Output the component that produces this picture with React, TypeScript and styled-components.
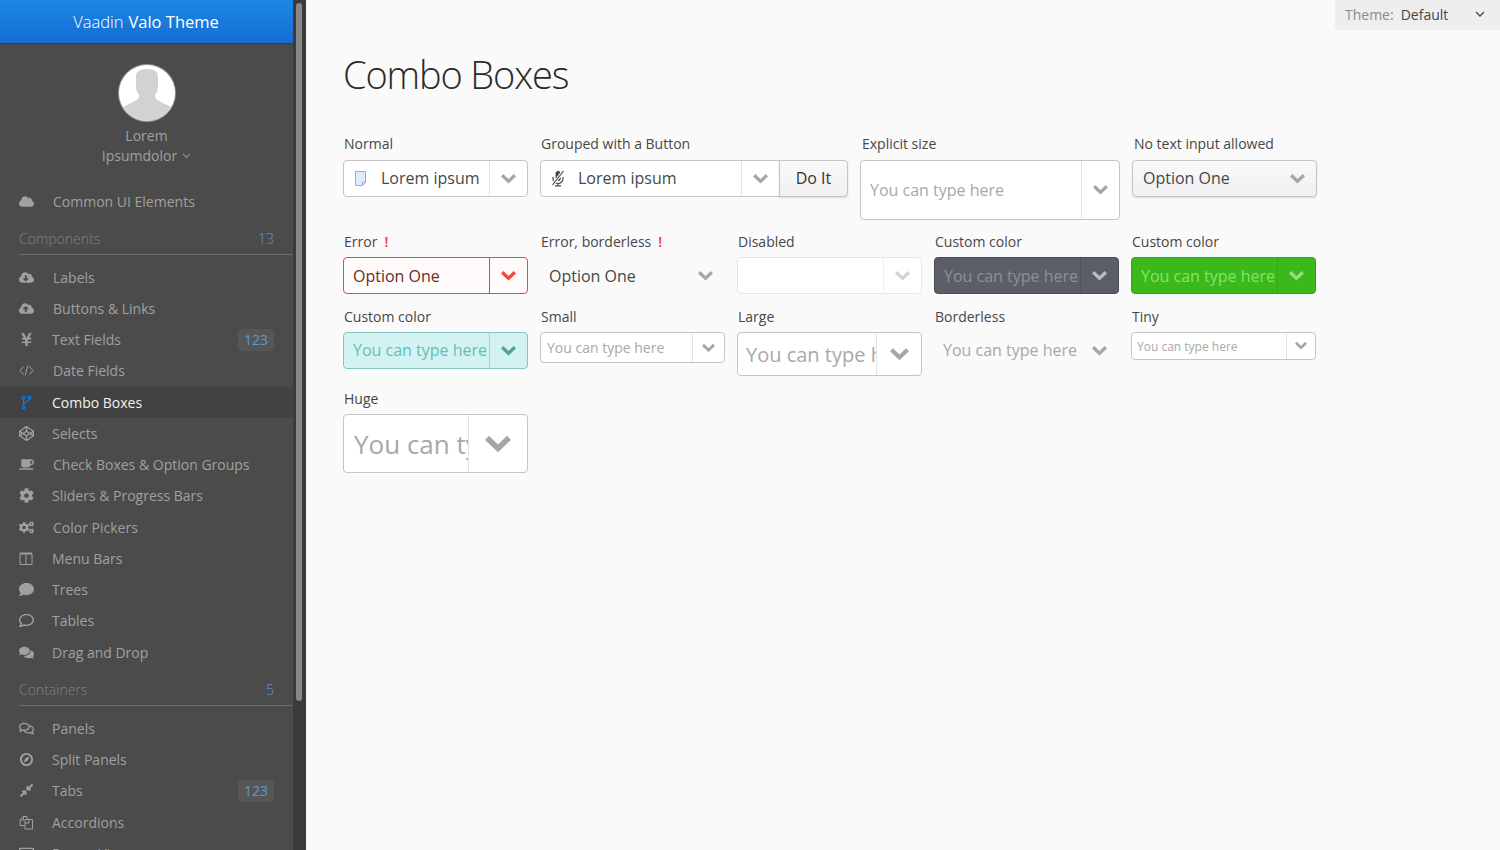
import React from "react";
import styled, { createGlobalStyle } from "styled-components";
import {
  FaCloud, FaCloudDownloadAlt, FaCloudUploadAlt, FaYenSign, FaCodepen,
  FaCoffee, FaCog, FaCogs, FaComment, FaRegComment, FaComments, FaRegComments,
  FaCompressAlt, FaRegCreditCard,
} from "react-icons/fa";

//#region Style Definitions
const GlobalStyle = createGlobalStyle`
  html, body { margin: 0; height: 100%; overflow: hidden; }
  body { font-family: "Open Sans", sans-serif; background: #fafafa; color: #474747; }
  * { box-sizing: border-box; }
`;

const Page = styled.div`
  display: flex;
  width: 1500px;
  height: 850px;
  overflow: hidden;
  position: relative;
`;

const Sidebar = styled.aside`
  width: 293px;
  flex: none;
  height: 850px;
  overflow: hidden;
  background: #4b4b4b;
`;

const ScrollTrack = styled.div`
  width: 13px;
  flex: none;
  background: #3b3b3b;
  padding: 3px 4px 0 3px;
`;

const ScrollThumb = styled.div`
  height: 698px;
  background: #868686;
  border-radius: 3px;
`;

const Brand = styled.div`
  height: 43px;
  display: flex;
  align-items: center;
  justify-content: center;
  padding-right: 1px;
  background: linear-gradient(to bottom, #1b88e4, #166cd3);
  color: #fff;
  font-size: 16.5px;
  gap: 5px;
  box-shadow: 0 1px 1px rgba(0, 0, 0, 0.2);
`;

const BrandLight = styled.span`
  font-weight: 300;
`;

const UserBlock = styled.div`
  display: flex;
  flex-direction: column;
  align-items: center;
  padding-top: 21px;
  height: 142.5px;
  color: #a0a0a0;
  font-size: 14px;
  line-height: 20px;
`;

const Avatar = styled.svg`
  width: 58px;
  height: 58px;
  margin-bottom: 4px;
  display: block;
`;

const UserName = styled.div`
  display: flex;
  align-items: center;
  gap: 5px;
`;

const NavRow = styled.div<{ $active?: boolean; $textGap: number }>`
  height: 31.25px;
  display: flex;
  align-items: center;
  padding-left: 19px;
  padding-right: 19px;
  font-size: 14px;
  color: ${(p) => (p.$active ? "#f2f2f2" : "#a0a0a0")};
  background: ${(p) => (p.$active ? "#424242" : "transparent")};

  & > svg {
    width: 15px;
    height: 15px;
    flex: none;
    margin-right: ${(p) => p.$textGap}px;
    color: ${(p) => (p.$active ? "#1f74cc" : "#a0a0a0")};
  }
`;

const NavLabel = styled.span`
  flex: 1;
  white-space: nowrap;
`;

const NavBadge = styled.span`
  width: 36px;
  height: 22px;
  border-radius: 4px;
  background: #565656;
  color: #5f97d2;
  font-size: 14px;
  display: flex;
  align-items: center;
  justify-content: center;
`;

const SectionHead = styled.div<{ $top: number; $bottom: number }>`
  margin: ${(p) => p.$top}px 0 ${(p) => p.$bottom}px 19px;
  height: 32px;
  display: flex;
  align-items: center;
  padding-right: 19px;
  border-bottom: 1px solid #6c6c6c;
  font-size: 14px;
  font-weight: 300;
  color: #808080;
`;

const SectionCount = styled.span`
  color: #5b93d0;
  margin-left: auto;
`;

const Main = styled.main`
  flex: 1;
  padding: 0 0 0 37px;
`;

const Title = styled.h1`
  margin: 0;
  padding-top: 47px;
  height: 135.4px;
  font-size: 38px;
  line-height: 54px;
  font-weight: 300;
  letter-spacing: -0.03em;
  color: #2b2b2b;
`;

const FieldWrap = styled.div`
  display: flex;
  flex-wrap: wrap;
  align-items: flex-start;
  gap: 13.15px 12px;
  width: 990px;
`;

const Field = styled.div<{ $width: number }>`
  width: ${(p) => p.$width}px;
`;

const Caption = styled.div<{ $indent: number }>`
  height: 24.3px;
  padding-left: ${(p) => p.$indent}px;
  font-size: 14px;
  line-height: 18px;
  color: #474747;
  white-space: nowrap;
`;

const ErrorMark = styled.span`
  color: #f0392c;
  font-weight: 600;
  margin-left: 7px;
`;

const GroupRow = styled.div`
  display: flex;
`;

type Tone = "plain" | "error" | "bare" | "dark" | "green" | "teal" | "button" | "off";

const tones: Record<Tone, { bg: string; line: string; split: string; text: string; hint: string; arrow: string }> = {
  plain: { bg: "#fff", line: "#c5c5c5", split: "#e4e4e4", text: "#474747", hint: "#a8a8a8", arrow: "#a6a6a6" },
  error: { bg: "#fffbfb", line: "#ed473b", split: "#ed473b", text: "#6c2a26", hint: "#a8a8a8", arrow: "#ed473b" },
  bare: { bg: "transparent", line: "transparent", split: "transparent", text: "#474747", hint: "#a8a8a8", arrow: "#a6a6a6" },
  dark: { bg: "#5b5e67", line: "#4a4c54", split: "#50535b", text: "#8e9097", hint: "#8e9097", arrow: "#bcbdc0" },
  green: { bg: "#3cb91a", line: "#34a516", split: "#35a717", text: "#86e26e", hint: "#86e26e", arrow: "#8fe27a" },
  teal: { bg: "#d2f3f1", line: "#86c4c1", split: "#a5d5d2", text: "#66bdb7", hint: "#66bdb7", arrow: "#53a19d" },
  button: { bg: "linear-gradient(to bottom, #fafafa, #efefef)", line: "#c5c5c5", split: "transparent", text: "#474747", hint: "#a8a8a8", arrow: "#a6a6a6" },
  off: { bg: "#fff", line: "#e6e6e6", split: "#eeeeee", text: "#ccc", hint: "#ccc", arrow: "#d3d3d3" },
};

const Box = styled.div<{ $tone: Tone; $height: number; $font: number; $joined?: boolean }>`
  display: flex;
  flex: 1;
  min-width: 0;
  height: ${(p) => p.$height}px;
  font-size: ${(p) => p.$font}px;
  background: ${(p) => tones[p.$tone].bg};
  border: 1px solid ${(p) => tones[p.$tone].line};
  border-radius: ${(p) => (p.$joined ? "4px 0 0 4px" : "4px")};
  ${(p) => (p.$tone === "button" ? "box-shadow: 0 1px 2px rgba(0,0,0,0.14);" : "")}
`;

const Value = styled.div<{ $tone: Tone; $hint: boolean; $left: number; $drop: number }>`
  flex: 1;
  min-width: 0;
  position: relative;
  overflow: hidden;
  white-space: nowrap;
  display: flex;
  align-items: center;
  padding-left: ${(p) => p.$left}px;
  padding-top: ${(p) => p.$drop}px;
  color: ${(p) => (p.$hint ? tones[p.$tone].hint : tones[p.$tone].text)};
`;

const LeadIcon = styled.span`
  position: absolute;
  left: 10px;
  top: 9px;
  display: flex;
`;

const Toggle = styled.div<{ $tone: Tone; $width: number }>`
  width: ${(p) => p.$width}px;
  flex: none;
  display: flex;
  align-items: center;
  justify-content: center;
  border-left: 1px solid ${(p) => tones[p.$tone].split};
  color: ${(p) => tones[p.$tone].arrow};
`;

const DoItButton = styled.div`
  width: 69px;
  height: 37px;
  flex: none;
  display: flex;
  align-items: center;
  justify-content: center;
  margin-left: -1px;
  padding-bottom: 1px;
  font-size: 16px;
  color: #333;
  border: 1px solid #c5c5c5;
  border-radius: 0 4px 4px 0;
  background: linear-gradient(to bottom, #fafafa, #efefef);
  box-shadow: 0 1px 2px rgba(0, 0, 0, 0.14);
`;

const ThemePicker = styled.div`
  position: absolute;
  top: 0;
  right: 0;
  width: 165px;
  height: 30px;
  display: flex;
  align-items: center;
  padding: 0 15px 2px 10px;
  background: #eeeeee;
  border-radius: 0 0 0 4px;
  font-size: 14px;
  color: #474747;
`;

const ThemeLabel = styled.span`
  color: #8c8c8c;
  margin-right: 7px;
`;

const ThemeValue = styled.span`
  flex: 1;
`;
//#endregion

const Chevron = ({ width }: { width: number }) => (
  <svg width={width} viewBox="0 0 15 11" fill="currentColor" aria-hidden="true">
    <path d="M0 3.4 2.3 1 7.5 6 12.700 1 15 3.4 7.5 10.5z" />
  </svg>
);

const ThinChevron = ({ width, color }: { width: number; color: string }) => (
  <svg width={width} viewBox="0 0 10 6" fill="none" stroke={color} strokeWidth="1.5" aria-hidden="true">
    <path d="M1 1l4 4 4-4" />
  </svg>
);

//#region Icons drawn by hand, the packages only have heavier versions
const CodeIcon = () => (
  <svg viewBox="0 0 15 15" fill="none" stroke="currentColor" strokeWidth="1">
    <path d="M4.500 3.500 1 7.500l3.500 4M10.500 3.500l3.500 4-3.500 4M8.800 2.500 6.200 12.500" />
  </svg>
);

const BranchIcon = () => (
  <svg viewBox="0 0 15 15" fill="none" stroke="currentColor" strokeWidth="1.3">
    <circle cx="4.500" cy="2.500" r="1.300" />
    <circle cx="10.500" cy="2.500" r="1.300" />
    <circle cx="4.500" cy="12.500" r="1.300" />
    <path d="M4.500 3.800v7.400M10.500 3.800c0 3.700-6 3-6 6" />
  </svg>
);

const ColumnsIcon = () => (
  <svg viewBox="0 0 15 15" fill="none" stroke="currentColor">
    <path d="M1 2.500h12v11H1zM7 2.500v11" />
    <path d="M1 2.500h12" strokeWidth="2" />
  </svg>
);

const CompassIcon = () => (
  <svg viewBox="0 0 15 15">
    <circle cx="7.500" cy="7.500" r="5.600" fill="none" stroke="currentColor" strokeWidth="1.900" />
    <path d="M10.500 4.500 8.700 8.700 4.500 10.500 6.300 6.300z" fill="currentColor" />
  </svg>
);

const CopyIcon = () => (
  <svg viewBox="0 0 15 15" fill="none" stroke="currentColor">
    <path d="M5.500 10.500H1V5l3-3.500h4V4" />
    <path d="M4.500 1.500V5H1" />
    <path d="M5.500 4.500h4l3.500 0v9.500H5.500zM9.500 4.500V8H5.500" transform="translate(.5 0)" />
  </svg>
);

const FileIcon = () => (
  <svg width="13" height="17" viewBox="0 0 13 17" aria-hidden="true">
    <path d="M1.500 1.500h10v10.500l-3 3.500h-7z" fill="#e0ecfb" stroke="#82b2e8" />
    <path d="M8.500 15.500V12h3z" fill="#fff" stroke="#82b2e8" />
  </svg>
);

const MicSlashIcon = () => (
  <svg width="14" height="17" viewBox="0 0 14 17" fill="#4a4a4a" aria-hidden="true">
    <path d="M4.500 3.500a2.600 2.600 0 0 1 5.200 0v5a2.600 2.600 0 0 1-5.200 0z" />
    <path d="M2 7v1.500a5 5 0 0 0 10 0V7M7 13.500v2M4 15.800h6" fill="none" stroke="#4a4a4a" strokeWidth="1.200" />
    <path d="M12.500 1 1.500 15" stroke="#fff" strokeWidth="3" />
    <path d="M12.500 1 1.500 15" stroke="#4a4a4a" strokeWidth="1.200" />
  </svg>
);
//#endregion

const sizes = {
  tiny: { height: 28, font: 12, toggle: 29, arrow: 12, left: 5, drop: 1 },
  small: { height: 31, font: 14, toggle: 32, arrow: 13, left: 6, drop: 0 },
  normal: { height: 37, font: 16, toggle: 38, arrow: 15, left: 9, drop: 0 },
  large: { height: 44.6, font: 20, toggle: 45, arrow: 19, left: 8, drop: 0 },
  huge: { height: 59, font: 26, toggle: 59, arrow: 26, left: 10, drop: 1 },
};

type ComboProps = {
  caption: string;
  width: number;
  text: string;
  hint?: boolean;
  tone?: Tone;
  size?: keyof typeof sizes;
  error?: boolean;
  lead?: React.ReactNode;
  boxHeight?: number;
  left?: number;
  indent?: number;
  withButton?: boolean;
};

function Combo(props: ComboProps) {
  const s = sizes[props.size || "normal"];
  const tone = props.tone || "plain";
  const box = (
    <Box $tone={tone} $height={props.boxHeight || s.height} $font={s.font} $joined={props.withButton}>
      <Value $tone={tone} $hint={!!props.hint} $left={props.lead ? 37 : props.left ?? s.left} $drop={s.drop}>
        {props.lead && <LeadIcon>{props.lead}</LeadIcon>}
        {props.text}
      </Value>
      <Toggle $tone={tone} $width={s.toggle}>
        <Chevron width={s.arrow} />
      </Toggle>
    </Box>
  );
  return (
    <Field $width={props.width}>
      <Caption $indent={props.indent ?? 1}>
        {props.caption}
        {props.error && <ErrorMark>!</ErrorMark>}
      </Caption>
      {props.withButton ? (
        <GroupRow>
          {box}
          <DoItButton>Do It</DoItButton>
        </GroupRow>
      ) : (
        box
      )}
    </Field>
  );
}

const itemsA = [
  { label: "Labels", icon: <FaCloudDownloadAlt />, gap: 19 },
  { label: "Buttons & Links", icon: <FaCloudUploadAlt />, gap: 19 },
  { label: "Text Fields", icon: <FaYenSign />, gap: 18, badge: "123" },
  { label: "Date Fields", icon: <CodeIcon />, gap: 19 },
  { label: "Combo Boxes", icon: <BranchIcon />, gap: 18, active: true },
  { label: "Selects", icon: <FaCodepen />, gap: 18 },
  { label: "Check Boxes & Option Groups", icon: <FaCoffee />, gap: 19 },
  { label: "Sliders & Progress Bars", icon: <FaCog />, gap: 18 },
  { label: "Color Pickers", icon: <FaCogs />, gap: 19 },
  { label: "Menu Bars", icon: <ColumnsIcon />, gap: 18 },
  { label: "Trees", icon: <FaComment />, gap: 18 },
  { label: "Tables", icon: <FaRegComment />, gap: 18 },
  { label: "Drag and Drop", icon: <FaComments />, gap: 18 },
];

const itemsB = [
  { label: "Panels", icon: <FaRegComments />, gap: 18 },
  { label: "Split Panels", icon: <CompassIcon />, gap: 18 },
  { label: "Tabs", icon: <FaCompressAlt />, gap: 18, badge: "123" },
  { label: "Accordions", icon: <CopyIcon />, gap: 18 },
  { label: "Popup Views", icon: <FaRegCreditCard />, gap: 18 },
];

type NavItem = { label: string; icon: React.ReactNode; gap: number; badge?: string; active?: boolean };

const renderItem = (item: NavItem) => (
  <NavRow key={item.label} $active={item.active} $textGap={item.gap}>
    {item.icon}
    <NavLabel>{item.label}</NavLabel>
    {item.badge && <NavBadge>{item.badge}</NavBadge>}
  </NavRow>
);

export default function App() {
  return (
    <Page>
      <GlobalStyle />
      <Sidebar>
        <Brand>
          <BrandLight>Vaadin</BrandLight>
          <span>Valo Theme</span>
        </Brand>
        <UserBlock>
          <Avatar viewBox="0 0 58 58" aria-hidden="true">
            <defs>
              <clipPath id="face">
                <circle cx="29" cy="29" r="28" />
              </clipPath>
            </defs>
            <circle cx="29" cy="29" r="29" fill="#9a9a9a" />
            <circle cx="29" cy="29" r="28" fill="#fff" />
            <path
              clipPath="url(#face)"
              fill="#d2d2d2"
              d="M18 12q0-7 11-7t11 7v10q0 6-3 9v1q0 3 4 5l12 6 5 1v15H0V44l5-1 12-6q4-2 4-5v-1q-3-3-3-9z"
            />
          </Avatar>
          <div>Lorem</div>
          <UserName>
            Ipsumdolor
            <ThinChevron width={9} color="#8a8a8a" />
          </UserName>
        </UserBlock>
        {renderItem({ label: "Common UI Elements", icon: <FaCloud />, gap: 19 })}
        <SectionHead $top={6.5} $bottom={6.25}>
          Components
          <SectionCount>13</SectionCount>
        </SectionHead>
        {itemsA.map(renderItem)}
        <SectionHead $top={6} $bottom={7}>
          Containers
          <SectionCount>5</SectionCount>
        </SectionHead>
        {itemsB.map(renderItem)}
      </Sidebar>
      <ScrollTrack>
        <ScrollThumb />
      </ScrollTrack>
      <Main>
        <Title>Combo Boxes</Title>
        <FieldWrap>
          <Combo caption="Normal" width={185} text="Lorem ipsum" lead={<FileIcon />} />
          <Combo caption="Grouped with a Button" width={308} text="Lorem ipsum" lead={<MicSlashIcon />} withButton />
          <Combo caption="Explicit size" width={260} text="You can type here" hint boxHeight={60.3} indent={2} />
          <Combo caption="No text input allowed" width={185} text="Option One" tone="button" left={10} indent={2} />
          <Combo caption="Error" width={185} text="Option One" tone="error" error />
          <Combo caption="Error, borderless" width={185} text="Option One" tone="bare" left={8} error />
          <Combo caption="Disabled" width={185} text="" tone="off" />
          <Combo caption="Custom color" width={185} text="You can type here" tone="dark" hint />
          <Combo caption="Custom color" width={185} text="You can type here" tone="green" hint />
          <Combo caption="Custom color" width={185} text="You can type here" tone="teal" hint />
          <Combo caption="Small" width={185} text="You can type here" hint size="small" />
          <Combo caption="Large" width={185} text="You can type here" hint size="large" />
          <Combo caption="Borderless" width={185} text="You can type here" hint tone="bare" left={8} />
          <Combo caption="Tiny" width={185} text="You can type here" hint size="tiny" />
          <Combo caption="Huge" width={185} text="You can type here" hint size="huge" />
        </FieldWrap>
      </Main>
      <ThemePicker>
        <ThemeLabel>Theme:</ThemeLabel>
        <ThemeValue>Default</ThemeValue>
        <ThinChevron width={10} color="#555" />
      </ThemePicker>
    </Page>
  );
}
